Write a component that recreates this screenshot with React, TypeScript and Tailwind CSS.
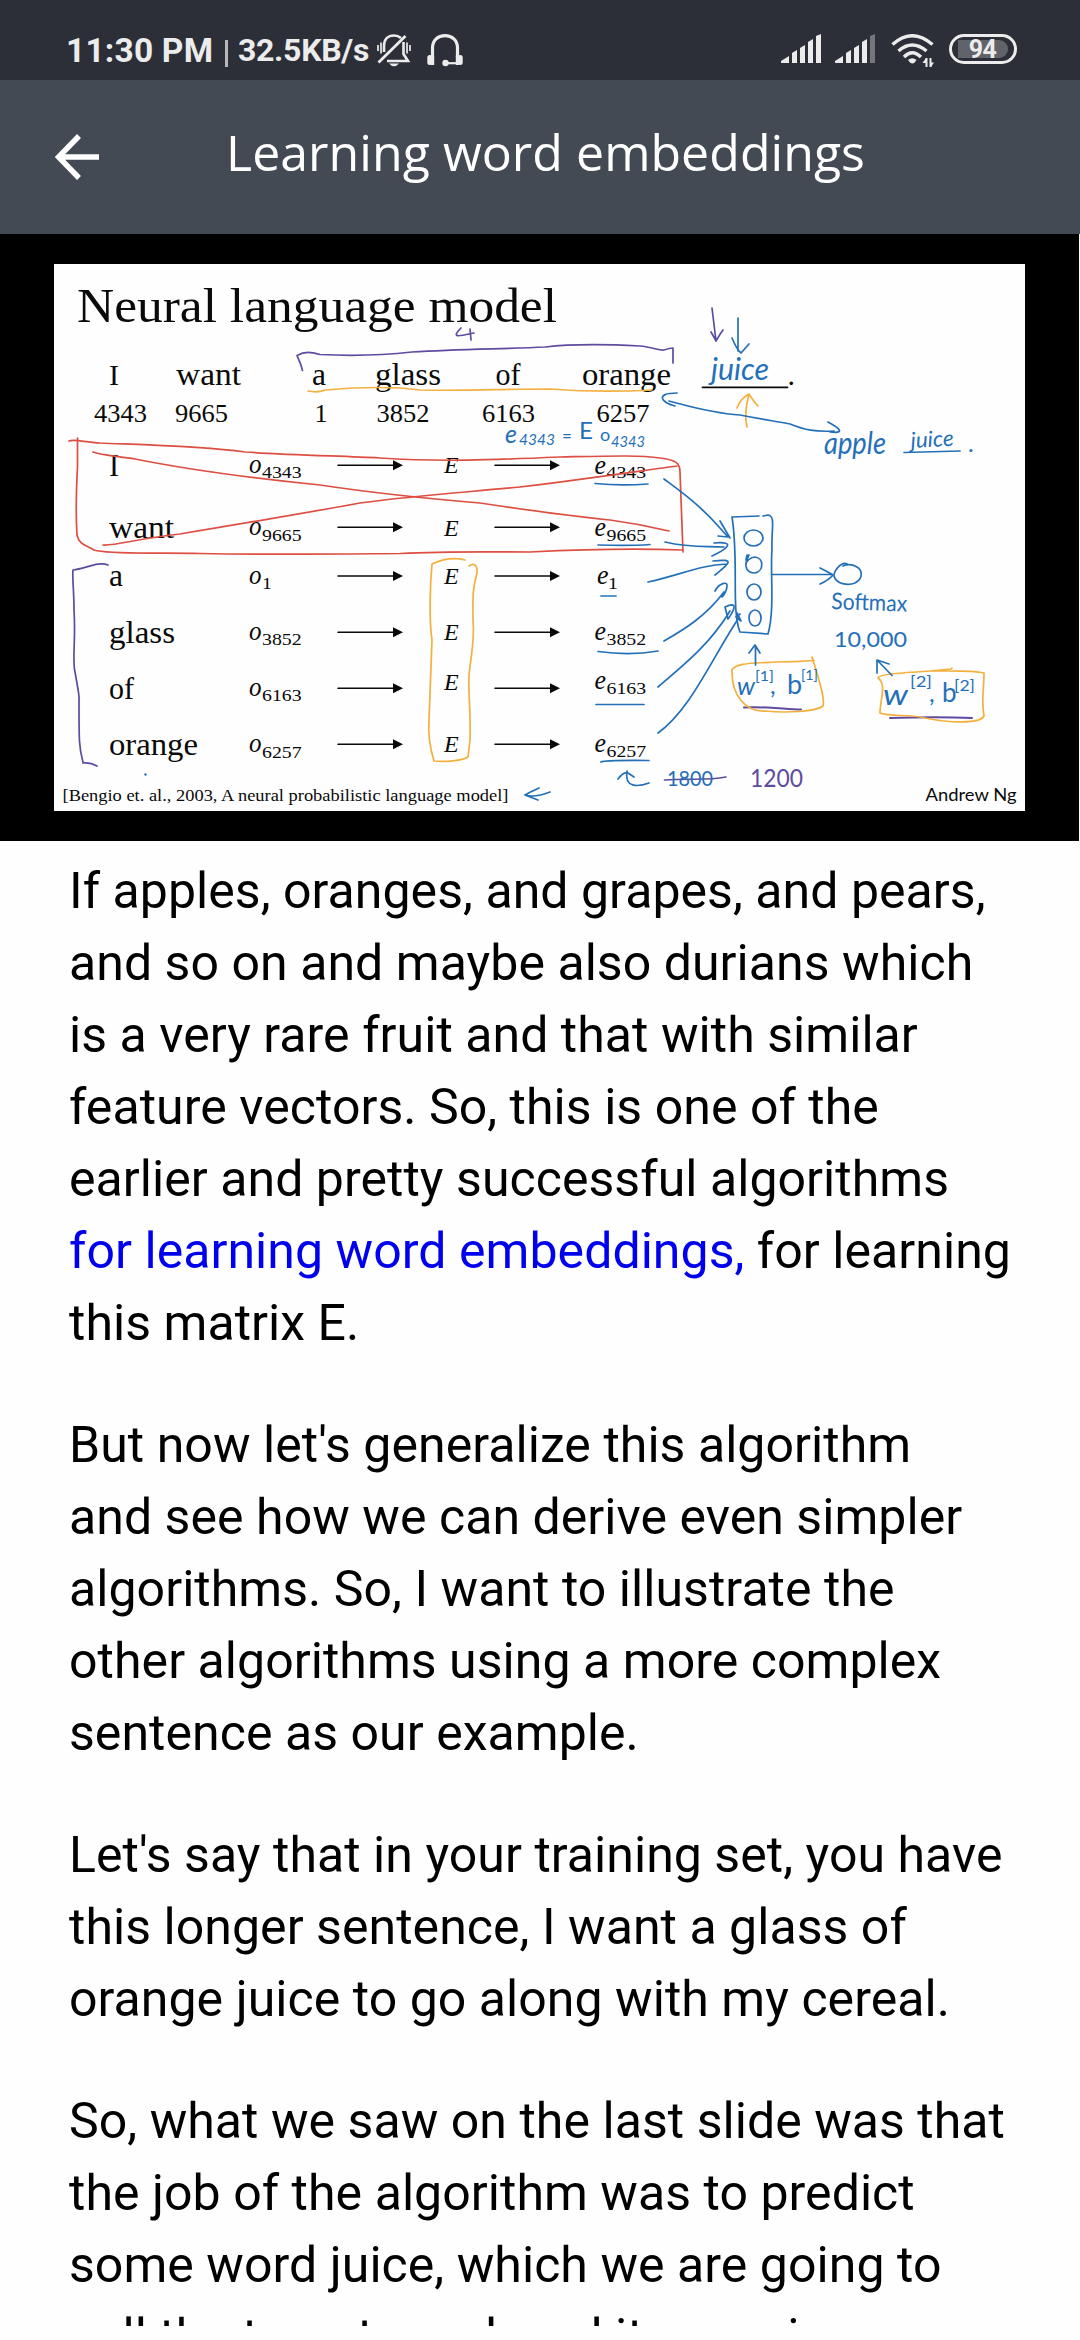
import React from "react";

const BLUE = "#2470b8";
const PURPLE = "#5f4ba0";
const RED = "#dd4f42";
const GOLD = "#f3b03e";

type LabelProps = {
  x: number;
  y: number;
  size: number;
  len?: number;
  italic?: boolean;
  children: string;
};

function Label({ x, y, size, len, italic, children }: LabelProps) {
  return (
    <text
      x={x}
      y={y}
      fontSize={size}
      textLength={len}
      lengthAdjust="spacingAndGlyphs"
      fontStyle={italic ? "italic" : "normal"}
      fill="#0a0a0a"
    >
      {children}
    </text>
  );
}

type InkProps = LabelProps & { color?: string; rotate?: number };

function Ink({ x, y, size, len, italic, color = BLUE, rotate = 0, children }: InkProps) {
  return (
    <text
      x={x}
      y={y}
      fontSize={size}
      textLength={len}
      lengthAdjust="spacingAndGlyphs"
      fontFamily="Lato, sans-serif"
      fontStyle={italic ? "italic" : "normal"}
      fill={color}
      transform={`rotate(${rotate} ${x} ${y})`}
    >
      {children}
    </text>
  );
}

function Arrow({ x, y }: { x: number; y: number }) {
  return (
    <g>
      <path d={`M${x} ${y}H${x + 58}`} stroke="#0a0a0a" strokeWidth={1.6} />
      <path d={`M${x + 55} ${y - 5}L${x + 65} ${y}L${x + 55} ${y + 5}Z`} fill="#0a0a0a" />
    </g>
  );
}

const rows = [
  { word: "I", len: 10, y: 475.7, id: "4343", oy: 472.7, arrow: 465.3, ey: 473.3, vy: 473.5 },
  { word: "want", len: 65, y: 538, id: "9665", oy: 535, arrow: 527.3, ey: 535.7, vy: 535.7 },
  { word: "a", len: 14, y: 586, id: "1", oy: 583.7, arrow: 576, ey: 584.3, vy: 584.3 },
  { word: "glass", len: 66, y: 642.7, id: "3852", oy: 639.7, arrow: 632.3, ey: 640.3, vy: 640 },
  { word: "of", len: 25, y: 698.7, id: "6163", oy: 695.7, arrow: 688.3, ey: 689.7, vy: 689 },
  { word: "orange", len: 89, y: 754.7, id: "6257", oy: 752, arrow: 744.3, ey: 752.3, vy: 752 },
];

function Slide() {
  return (
    <svg
      viewBox="54 264 971 547"
      className="block h-[547px] w-[971px] bg-[#fefefe]"
      fontFamily="'Liberation Serif', serif"
      fill="none"
      strokeLinecap="round"
      strokeLinejoin="round"
    >
      <Label x={77} y={321.5} size={48} len={480}>Neural language model</Label>

      <Label x={109} y={385} size={30} len={10}>I</Label>
      <Label x={176} y={385} size={31} len={65}>want</Label>
      <Label x={312} y={385} size={31} len={14}>a</Label>
      <Label x={375} y={385} size={31} len={66}>glass</Label>
      <Label x={495.5} y={385} size={31} len={25}>of</Label>
      <Label x={582} y={385} size={31} len={89}>orange</Label>
      <path d="M702.5 387.3H787.5" stroke="#0a0a0a" strokeWidth={1.8} />
      <Label x={787.5} y={385} size={30}>.</Label>

      <Label x={94} y={421.6} size={24.5} len={53}>4343</Label>
      <Label x={175} y={421.6} size={24.5} len={53}>9665</Label>
      <Label x={314.5} y={421.6} size={24.5} len={13}>1</Label>
      <Label x={376.5} y={421.6} size={24.5} len={53}>3852</Label>
      <Label x={482} y={421.6} size={24.5} len={53}>6163</Label>
      <Label x={596.5} y={421.6} size={24.5} len={53}>6257</Label>

      {rows.map((r) => (
        <g key={r.id}>
          <Label x={109} y={r.y} size={31} len={r.len}>{r.word}</Label>
          <Label x={249} y={r.oy} size={27} len={12.5} italic>o</Label>
          <Label x={262} y={r.oy + 5.7} size={17.5} len={r.id.length * 9.9}>{r.id}</Label>
          <Arrow x={338} y={r.arrow} />
          <Label x={444} y={r.ey} size={24} italic>E</Label>
          <Arrow x={495} y={r.arrow} />
          <Label x={r.id === "1" ? 597 : 594.5} y={r.vy} size={27} len={11.5} italic>e</Label>
          <Label x={r.id === "1" ? 608 : 606.5} y={r.vy + 4.8} size={17.5} len={r.id.length * 9.9}>{r.id}</Label>
        </g>
      ))}

      <Label x={62.5} y={801} size={17} len={446}>[Bengio et. al., 2003, A neural probabilistic language model]</Label>
      <text x={925.5} y={801} fontSize={18} textLength={91} lengthAdjust="spacingAndGlyphs" fontFamily="Lato, sans-serif" fill="#0a0a0a">
        Andrew Ng
      </text>

      <g stroke={RED} strokeWidth={1.7}>
        <path d="M69 441C74 439 84 442 100 443C150 445 200 446 245 452C290 455 340 456 380 458C440 462 490 460 560 457C610 456 640 455 660 458C676 460 680 463 680 472L683 552" />
        <path d="M77.500 438V467C76 495 76 520 77 535C79 545 86 545 94 550C110 555 160 552 200 553.500C280 555 340 554 400 553.500C450 551 490 552 530 552C570 550 630 548 682 550" />
        <path d="M93 452C100 455 115 456 135 459C190 470 270 480 320 485C380 494 420 498 480 503C540 512 570 516 610 520Q640 524 669 531" />
        <path d="M103 545C115 546 140 538 180 534C240 524 300 514 360 503C420 495 470 492 520 487C580 480 640 471 677 466" />
      </g>

      <g stroke={PURPLE} strokeWidth={1.7}>
        <path d="M302.500 370.500C301 364 299 360 297 355.500C305 351 311 352 320 354.500C350 356 385 355 412 352C460 349 505 349 545 347C580 343 620 345 640 346C652 347 660 351 664 350Q670 348 673 348V363" />
        <path d="M461 328C450 339 460 336 474 333M470 329L471 340" />
        <path d="M108 565C98 561 85 569 73 570C72 575 74 590 74 610C76 640 72 660 75 672C80 700 79 695 79 705C79 740 79 748 83 762V763Q90 762 97 766" />
        <path d="M712 308Q714 325 716 341M711 332Q714 337 716 341Q720 334 723 330" />
        <path d="M664.500 780C690 778 705 781 726 777" />
        <path d="M744 707.500C760 706 785 709 801 709.500M890 718C920 717 950 717 972 718" strokeWidth={2} />
      </g>

      <g stroke={GOLD} strokeWidth={1.7}>
        <path d="M308 391Q318 393 325 390C360 387 390 386 420 390C470 391 500 389 550 389C590 392 615 392 652 390" />
        <path d="M747 427C744 415 746 405 749 394Q740 399 737 408M749 394Q754 402 758 406" />
        <path d="M432 564C443 559 453 557 465 560M469 566C474 562 478 566 477 573C472 590 473 600 473 620C475 640 471 655 469 675C468 690 471 715 470 740L468 757C462 761 445 762 434 761C429 745 428 733 429 720L432 640C429 620 430 585 432 564" />
        <path d="M812 657C819 680 825 698 823 706C816 712 785 713 765 711C745 712 732 695 732 672C730 663 755 663 775 662Q795 662 814 660.500" />
        <path d="M952 668L951 669L930 671C900 673 879 674 878 678C887 684 880 700 880 713C890 717 910 714 925 718C950 723 980 724 984 716C981 700 984 690 984 673C970 670 945 671 931 671" />
      </g>

      <g stroke={BLUE} strokeWidth={1.7}>
        <path d="M738 318V351M732 338Q737 350 741 353L749 344" />
        <path d="M669 401C685 405 710 413 740 415C765 420 775 421 790 424C805 430 815 432 834 431M677 393C654 393 662 403 675 406M828 422Q850 434 830 432" />
        <path d="M664 479C680 491 700 505 719 527L728 537L718 536M720 521L730 538" />
        <path d="M665 542C690 548 705 546 724 547M714 543C737 541 727 549 712 556" />
        <path d="M648 582C680 575 700 565 727 564M713 561C738 558 727 565 715 575" />
        <path d="M664 641C685 629 706 616 724 592M715 591C719 583 728 581 727 586C727 590 724 595 722 597" />
        <path d="M658 687C685 664 710 644 730 611M725 607C737 601 736 608 728 619Z" />
        <path d="M658 733C690 710 710 662 738 619M737 613L741 621L736 617L740 614" />
        <path d="M759 516L732 517C739 560 731 610 740 632L768 634C775 610 770 570 772 550C771 530 776 516 768 515L763 516" />
        <ellipse cx="753.500" cy="538" rx="9.500" ry="8" />
        <path d="M749 555C742 568 748 573 755 573C764 571 764 558 755 557C750 557 746 562 746 564M747 555L746 560" />
        <ellipse cx="754" cy="592" rx="7" ry="8" />
        <ellipse cx="755" cy="618" rx="6" ry="8" />
        <path d="M772 574.500H832M820 568Q830 573 833 575Q829 580 820 584" />
        <path d="M847 564C842 561 834 570 834 576C836 584 848 586 855 583C864 578 862 570 857 567Q850 563 843 566" />
        <path d="M755.500 665V646M749 653L755 645L760 653" />
        <path d="M892 675.500L878 661M877 673V660L889 664" />
        <path d="M595 483.500Q620 486 648 484M598 545Q630 546 650 544.500M601 596H616M598 651.500Q630 656 658 651M596 704.500H644M601 762Q605 760 649 760.500" />
        <path d="M550 792Q535 798 525 795Q530 792 539 788M525 795L538 800" />
        <path d="M618 779Q624 771 628 773L634 777M627 771C624 788 638 787 649 783" />
        <path d="M904 452.500L960 451" />
      </g>
      <circle cx="145.500" cy="774.500" r="1.200" fill={BLUE} />

      <Ink x={711} y={380} size={31} len={58} italic>juice</Ink>
      <Ink x={505} y={443} size={25} italic>e</Ink>
      <Ink x={519} y={445} size={15} len={36} italic>4343</Ink>
      <Ink x={562} y={442} size={17}>=</Ink>
      <Ink x={579} y={439} size={24} len={14}>E</Ink>
      <Ink x={600} y={441} size={18}>o</Ink>
      <Ink x={611} y={447} size={15} len={34} italic>4343</Ink>
      <Ink x={824} y={454} size={31} len={62} italic>apple</Ink>
      <Ink x={911} y={448} size={22} len={43} italic rotate={-3}>juice</Ink>
      <Ink x={968} y={452} size={24}>.</Ink>
      <Ink x={831} y={609} size={23} len={76} rotate={2}>Softmax</Ink>
      <Ink x={834} y={647} size={21} len={73}>10,000</Ink>
      <Ink x={737} y={695} size={25} len={18} italic>w</Ink>
      <Ink x={755} y={681} size={14} len={19}>[1]</Ink>
      <Ink x={770} y={694} size={25}>,</Ink>
      <Ink x={787} y={694} size={27}>b</Ink>
      <Ink x={801} y={680} size={14} len={17}>[1]</Ink>
      <Ink x={883} y={705} size={29} len={25} italic>w</Ink>
      <Ink x={910} y={687} size={15} len={22}>[2]</Ink>
      <Ink x={929} y={702} size={25}>,</Ink>
      <Ink x={942} y={702} size={26}>b</Ink>
      <Ink x={954} y={691} size={15} len={21}>[2]</Ink>
      <Ink x={667} y={786} size={21} len={46}>1800</Ink>
      <Ink x={750} y={787} size={25} len={53} color={PURPLE}>1200</Ink>
    </svg>
  );
}

function Signal({ weak }: { weak?: boolean }) {
  return (
    <svg viewBox="0 0 40 30" className="h-[30px] w-10" fill="#ececec">
      <path d="M0 27L8 22V29H0.500Q0 29 0 28Z" />
      <path d="M11 19L16 16V29H11Z" />
      <path d="M19 14L24 11V29H19Z" />
      <path d="M27 8L32 5V29H27Z" />
      <path d="M35 2L40 0V29H35Z" fill={weak ? "#73767a" : "#ececec"} />
    </svg>
  );
}

function StatusBar() {
  return (
    <div className="flex h-20 items-start bg-[#2c2f37] pt-[34px] pl-[66px] font-['Roboto'] font-bold leading-[33px] text-[#ececec]">
      <span className="w-[148px] whitespace-nowrap text-[33.5px] tracking-[0.2px]">11:30 PM</span>
      <span className="mt-[6px] ml-[10.5px] h-[27px] w-[3px] bg-[#b5b7ba]" />
      <span className="ml-[10.5px] w-[132px] whitespace-nowrap text-[32px] tracking-[-0.3px]">32.5KB/s</span>
      <svg viewBox="0 0 34 33" className="ml-[7px] h-[33px] w-[34px]" fill="none" stroke="#ececec" strokeWidth="2.600">
        <path d="M7 18V12C7 5 11 1.500 17 1.500Q21 1.500 24 4M26.500 8V20L31 27H10" />
        <path d="M1.500 28.500L28.500 2" strokeWidth="2.800" />
        <path d="M1 11V17M4 8.500V19.500M30 8.500V19.500M33 11V17" strokeWidth="1.700" />
        <path d="M12 29.500H22Q17 35 12 29.500Z" fill="#ececec" stroke="none" />
      </svg>
      <svg viewBox="0 0 36 33" className="ml-4 h-[33px] w-9" fill="none" stroke="#ececec" strokeWidth="3.200">
        <path d="M5.500 23V14C5.500 6 11 1.600 18 1.600C25 1.600 30.500 6 30.500 14V23" />
        <path d="M5.500 21.500V31M30.500 21.500V31" strokeWidth="3.400" />
        <rect x="0.300" y="21" width="5" height="10" rx="2.500" fill="#ececec" stroke="none" />
        <rect x="30.700" y="21" width="5" height="10" rx="2.500" fill="#ececec" stroke="none" />
        <path d="M18 29.200H30" strokeWidth="2.200" />
        <circle cx="18.500" cy="29" r="3.200" fill="#ececec" stroke="none" />
      </svg>
      <div className="ml-auto flex pr-[63.5px]">
        <Signal />
        <div className="w-3.5" />
        <Signal weak />
        <svg viewBox="0 0 44 34" className="ml-[15.5px] h-[34px] w-11" fill="none" stroke="#ececec" strokeWidth="3.400">
          <path d="M1.500 10.500Q21 -7 41.500 10.500" />
          <path d="M7.500 17Q21 5 35.500 17" />
          <path d="M13 23Q21 14.500 30 23" />
          <path d="M17 26Q21 22.500 25.500 26Q21.500 33 17 26Z" fill="#ececec" stroke="none" />
          <path d="M35.500 33V24M39.500 24V33" strokeWidth="2" />
          <path d="M31.500 29L35 24V29ZM43 28.500L40 33V28.500Z" fill="#ececec" stroke="none" />
        </svg>
        <div className="ml-3.5 flex h-[30px] w-[68px] items-center rounded-full border-[3px] border-[#ececec] p-[6px]">
          <div className="flex h-[18px] w-full items-center justify-center rounded-r-full rounded-l-[4px] bg-[#60636a] text-[25px] leading-none tracking-[-0.5px]">
            94
          </div>
        </div>
      </div>
    </div>
  );
}

function Header() {
  return (
    <div className="flex h-[154px] items-center bg-[#444a53] pl-[55px]">
      <svg viewBox="0 0 44 46" className="h-[46px] w-11" fill="none" stroke="#ffffff" strokeWidth="5.500">
        <path d="M24 2L3.500 23L24 44M3.500 23H44" />
      </svg>
      <h1 className="-mt-[11px] ml-[127px] whitespace-nowrap font-['Open_Sans'] text-[50px] leading-none tracking-[0.05px] text-white">
        Learning word embeddings
      </h1>
    </div>
  );
}

function Transcript() {
  return (
    <div className="flex h-[1485px] flex-col gap-[50px] overflow-hidden bg-[#fefefe] pt-[14px] pl-[69px] font-['Roboto'] text-[50px] leading-[72px] tracking-[0.05px] whitespace-nowrap text-black">
      <p>
        If apples, oranges, and grapes, and pears,<br />
        and so on and maybe also durians which<br />
        is a very rare fruit and that with similar<br />
        feature vectors. So, this is one of the<br />
        earlier and pretty successful algorithms<br />
        <span className="text-[#0000ee]">for learning word embeddings,</span> for learning<br />
        this matrix E.
      </p>
      <p>
        But now let's generalize this algorithm<br />
        and see how we can derive even simpler<br />
        algorithms. So, I want to illustrate the<br />
        other algorithms using a more complex<br />
        sentence as our example.
      </p>
      <p>
        Let's say that in your training set, you have<br />
        this longer sentence, I want a glass of<br />
        orange juice to go along with my cereal.
      </p>
      <p>
        So, what we saw on the last slide was that<br />
        the job of the algorithm was to predict<br />
        some word juice, which we are going to<br />
        call the target word, and it was given
      </p>
    </div>
  );
}

export default function App() {
  return (
    <div className="flex h-[2340px] w-[1080px] flex-col overflow-hidden bg-[#fefefe]">
      <StatusBar />
      <Header />
      <div className="h-[607px] w-[1079px] bg-black pt-[30px] pl-[54px]">
        <Slide />
      </div>
      <Transcript />
    </div>
  );
}
